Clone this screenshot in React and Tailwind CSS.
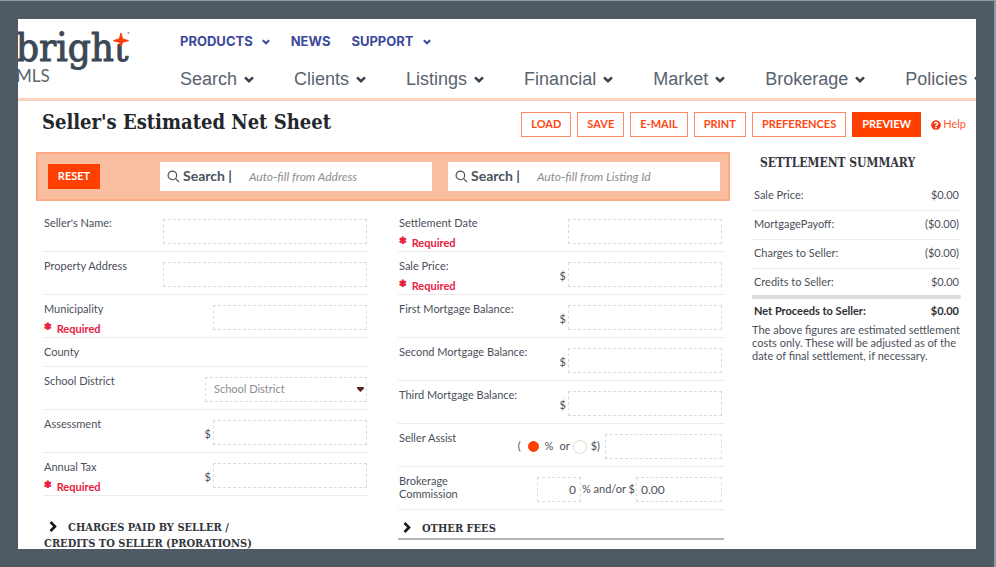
import { FaQuestionCircle } from "react-icons/fa";

const SLAB = "font-['DejaVu_Serif_Condensed','DejaVu_Serif',serif]";

function Chevron({ className }) {
  return (
    <svg viewBox="0 0 12 8" className={className} fill="none" stroke="currentColor" strokeWidth="3" aria-hidden="true">
      <path d="M1.2 1.4 L6 6 L10.8 1.4" />
    </svg>
  );
}

function Logo() {
  return (
    <a href="#home" className="relative -ml-[2px] block w-[164px] shrink-0 text-[#3c4856]">
      <span className={`${SLAB} block text-[40px] leading-[56px] [-webkit-text-stroke:1px_#3c4856]`}>bright</span>
      <svg viewBox="0 0 20 20" className="absolute top-[12px] left-[96px] h-[20px] w-[20px]" aria-hidden="true">
        <rect x="1" y="0" width="19" height="13" fill="#fff" />
        <path d="M9 2 L10.600 7.800 L16.500 9.700 L10.600 11.300 L9 15.500 L7.400 11.300 L1.500 9.700 L7.400 7.800 Z" fill="#ff3d0a" stroke="#ff3d0a" strokeWidth="1" />
        <circle cx="16.500" cy="1.800" r="1" fill="#9aa2aa" />
      </svg>
      <span className="-mt-[8px] block font-['Lato',sans-serif] text-[17px] leading-[18px] text-[#5b646e]">MLS</span>
    </a>
  );
}

const topLinks = [
  { label: "PRODUCTS", menu: true },
  { label: "NEWS", menu: false },
  { label: "SUPPORT", menu: true },
];

const mainLinks = ["Search", "Clients", "Listings", "Financial", "Market", "Brokerage", "Policies"];

function Header() {
  return (
    <header className="flex h-[82px] border-b-[3px] border-[#fbd3bd]">
      <Logo />
      <div className="flex flex-col whitespace-nowrap">
        <nav aria-label="Company" className="mt-[13px] flex h-5 items-center gap-[21px] font-['Inter',sans-serif] text-[13px] font-bold text-[#3b4a9b]">
          {topLinks.map((l) => (
            <a key={l.label} href={`#${l.label}`} className="flex items-center gap-[9px]">
              {l.label}
              {l.menu && <Chevron className="h-[6px] w-[8px]" />}
            </a>
          ))}
        </nav>
        <nav aria-label="Main" className="mt-[15px] flex h-6 items-center gap-[40px] font-['Liberation_Sans',Arial,sans-serif] text-[18px] text-[#59636e]">
          {mainLinks.map((l) => (
            <a key={l} href={`#${l}`} className="flex items-center gap-[7px]">
              {l}
              <Chevron className="h-[7px] w-[10px] text-[#38424d]" />
            </a>
          ))}
        </nav>
      </div>
    </header>
  );
}

function Toolbar() {
  const outline = "h-[25px] border border-[#ff8a63] px-[9px] text-[#ff4713]";
  return (
    <div className="flex items-start justify-between pt-[6px] pr-[10px] pl-[24px]">
      <h1 className={`${SLAB} text-[20px] leading-[30px] font-bold whitespace-nowrap text-[#23262b]`}>Seller's Estimated Net Sheet</h1>
      <div className="mt-[5px] flex items-center gap-[6px] text-[11px] font-bold">
        {["LOAD", "SAVE", "E-MAIL", "PRINT", "PREFERENCES"].map((b) => (
          <button key={b} type="button" className={outline}>{b}</button>
        ))}
        <button type="button" className="h-[25px] bg-[#ff4000] px-[10px] text-white">PREVIEW</button>
        <a href="#help" className="ml-[4px] flex items-center gap-[2px] text-[11px] font-normal text-[#ff5a2c]">
          <FaQuestionCircle className="h-[10px] w-[10px] text-[#f03a17]" />
          Help
        </a>
      </div>
    </div>
  );
}

function AutoFill({ id, placeholder }) {
  return (
    <div className="flex h-[29px] min-w-0 flex-1 items-center bg-white pl-[7px]">
      <svg viewBox="0 0 14 14" className="h-[13px] w-[13px]" fill="none" stroke="#4a525e" strokeWidth="1.300" aria-hidden="true">
        <circle cx="5.800" cy="5.800" r="4.600" />
        <path d="M9.200 9.200 L13 13" />
      </svg>
      <label htmlFor={id} className="ml-[3px] pb-[2px] text-[14px] font-bold whitespace-nowrap text-[#4a525e]">Search |</label>
      <input id={id} type="text" placeholder={placeholder} className="ml-[17px] min-w-0 flex-1 bg-transparent text-[12px] italic outline-none placeholder:text-[#8b8d90]" />
    </div>
  );
}

const box = "h-[25px] border border-dashed border-[#dcdcd4] bg-white px-[4px] text-[#4a4f5a] outline-none";

function Row({ label, id, required, short, children }) {
  return (
    <div className={`flex justify-between border-b border-[#ececec] pr-[2px] ${short ? "h-[29px]" : "h-[43px]"}`}>
      <div className="pt-[7px] pl-px leading-[14px]">
        <label htmlFor={id} className="block max-w-[130px] leading-[13px] whitespace-pre-line">{label}</label>
        {required && (
          <p className="flex items-start gap-[5px] pt-[7px] font-bold text-[#e8213f]">
            <span className="h-[6px] text-[18px] leading-[16px] font-black [-webkit-text-stroke:1px_#e8213f]">*</span>
            <span>Required</span>
          </p>
        )}
      </div>
      <div className="mt-[10px] flex h-[25px] items-center">{children}</div>
    </div>
  );
}

function Money({ id }) {
  return (
    <>
      <span className="mt-[4px] mr-[2px]">$</span>
      <input id={id} type="text" className={`${box} w-[154px]`} />
    </>
  );
}

function SectionHeading({ children, className }) {
  return (
    <h2 className={`${SLAB} text-[11px] leading-[16px] font-bold text-[#33363d] ${className}`}>
      <svg viewBox="0 0 8 11" className="mr-[11px] ml-[5px] inline-block h-[11px] w-[8px] align-[-1px]" fill="none" stroke="#15171a" strokeWidth="2.600" aria-hidden="true">
        <path d="M1.500 1 L6 5.500 L1.500 10" />
      </svg>
      {children}
    </h2>
  );
}

function SellerForm() {
  return (
    <form className="min-w-0">
      <div className="flex h-[49px] items-center gap-[16px] border-2 border-[#fca986] bg-[#f9bea0] pr-[8px] pl-[10px]">
        <button type="reset" className="mr-[44px] h-[25px] w-[52px] bg-[#ff4000] text-[11px] font-bold text-white">RESET</button>
        <AutoFill id="fill-address" placeholder="Auto-fill from Address" />
        <AutoFill id="fill-listing" placeholder="Auto-fill from Listing Id" />
      </div>
      <div className="grid grid-cols-2 gap-[29px] pt-[8px] pr-[6px] pl-[7px] text-[11px] text-[#4a4f5a]">
        <div>
          <Row label="Seller's Name:" id="seller"><input id="seller" type="text" className={`${box} w-[204px]`} /></Row>
          <Row label="Property Address" id="address"><input id="address" type="text" className={`${box} w-[204px]`} /></Row>
          <Row label="Municipality" id="municipality" required><input id="municipality" type="text" className={`${box} w-[154px]`} /></Row>
          <Row label="County" short />
          <Row label="School District" id="district">
            <div className="relative">
              <select id="district" className={`${box} w-[162px] appearance-none pl-[8px] text-[#8b8d90]`}>
                <option>School District</option>
              </select>
              <svg viewBox="0 0 8 6" className="pointer-events-none absolute top-[10px] right-[3px] h-[5px] w-[7px]" aria-hidden="true">
                <path d="M0 0 H8 V2 L4 6 L0 2 Z" fill="#5a2420" />
              </svg>
            </div>
          </Row>
          <Row label="Assessment" id="assessment"><Money id="assessment" /></Row>
          <Row label="Annual Tax" id="tax" required><Money id="tax" /></Row>
          <SectionHeading className="pt-[24px] pl-px">CHARGES PAID BY SELLER /<br />CREDITS TO SELLER (PRORATIONS)</SectionHeading>
        </div>
        <div>
          <Row label="Settlement Date" id="date" required><input id="date" type="text" className={`${box} w-[154px]`} /></Row>
          <Row label="Sale Price:" id="price" required><Money id="price" /></Row>
          <Row label="First Mortgage Balance:" id="first"><Money id="first" /></Row>
          <Row label="Second Mortgage Balance:" id="second"><Money id="second" /></Row>
          <Row label="Third Mortgage Balance:" id="third"><Money id="third" /></Row>
          <Row label="Seller Assist" id="assist">
            <span>(</span>
            <input id="assist-percent" name="assist-unit" type="radio" defaultChecked className="ml-[7px] h-[11px] w-[11px] appearance-none rounded-full border border-[#dcdcd4] checked:border-[#ff4000] checked:bg-[#ff4000]" />
            <label htmlFor="assist-percent" className="ml-[6px]">%</label>
            <span className="ml-[6px]">or</span>
            <input id="assist-dollar" name="assist-unit" type="radio" className="ml-[3px] h-[14px] w-[14px] appearance-none rounded-full border border-[#dcdcd4] checked:border-[#ff4000] checked:bg-[#ff4000]" />
            <label htmlFor="assist-dollar" className="mr-[5px] ml-[4px]">$)</label>
            <input id="assist" type="text" className={`${box} w-[117px]`} />
          </Row>
          <Row label={"Brokerage\nCommission"} id="commission">
            <input id="commission" type="text" defaultValue="0" className={`${box} w-[44px] text-right text-[12px]`} />
            <label htmlFor="commission-flat" className="mx-px">% and/or $</label>
            <input id="commission-flat" type="text" defaultValue="0.00" className={`${box} w-[86px] text-[12px]`} />
          </Row>
          <SectionHeading className="border-b-2 border-[#b4b5b9] pt-[11px] pb-px">OTHER FEES</SectionHeading>
        </div>
      </div>
    </form>
  );
}

const figures = [
  ["Sale Price:", "$0.00"],
  ["MortgagePayoff:", "($0.00)"],
  ["Charges to Seller:", "($0.00)"],
  ["Credits to Seller:", "$0.00"],
];

function Summary() {
  return (
    <aside className="text-[11px] text-[#4a4f5a]">
      <h2 className={`${SLAB} pt-[3px] pl-[8px] text-[12px] leading-[16px] font-bold text-[#33363d]`}>SETTLEMENT SUMMARY</h2>
      <table className="mt-[10px] w-full">
        <tbody>
          {figures.map(([name, amount]) => (
            <tr key={name} className="h-[29px] border-b border-[#ececec] last:border-0">
              <th scope="row" className="pl-[2px] text-left font-normal">{name}</th>
              <td className="pr-[2px] text-right">{amount}</td>
            </tr>
          ))}
        </tbody>
        <tfoot>
          <tr className="h-[26px] border-t-4 border-[#dddee1] font-bold text-[#2c2f36]">
            <th scope="row" className="pl-[2px] text-left">Net Proceeds to Seller:</th>
            <td className="pr-[2px] text-right">$0.00</td>
          </tr>
        </tfoot>
      </table>
      <p className="leading-[13px]">The above figures are estimated settlement costs only. These will be adjusted as of the date of final settlement, if necessary.</p>
    </aside>
  );
}

export default function App() {
  return (
    <div className="h-screen border-t border-r-2 border-[#929aa1] bg-[#505a64] pt-[18px] pr-[18px] pb-[18px] pl-[18px] font-['Lato',sans-serif]">
      <div className="h-full overflow-hidden bg-white">
        <Header />
        <Toolbar />
        <main className="grid grid-cols-[1fr_209px] gap-[22px] pt-[15px] pr-[15px] pl-[18px]">
          <SellerForm />
          <Summary />
        </main>
      </div>
    </div>
  );
}
